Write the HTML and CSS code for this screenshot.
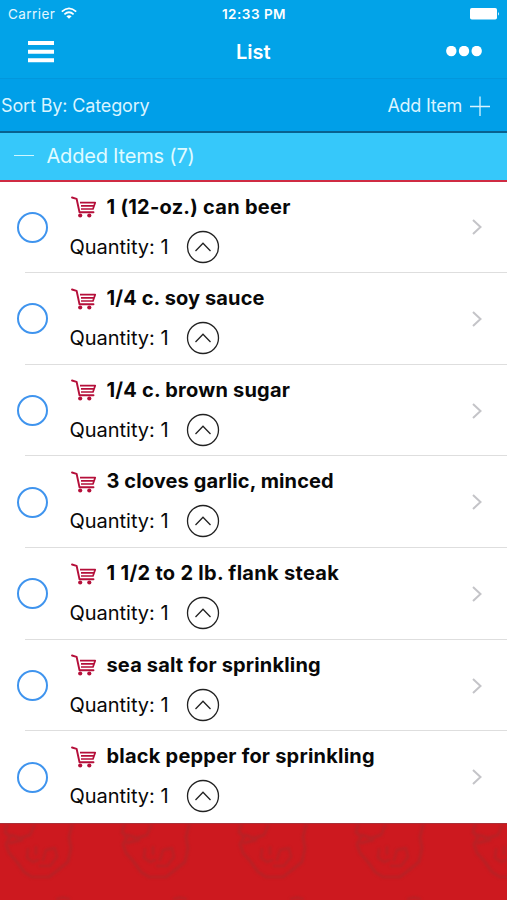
FILE: index.html
```
<!DOCTYPE html>
<html lang="en">
<head>
<meta charset="utf-8">
<title>List</title>
<link rel="stylesheet" href="styles.css">
</head>
<body>
<svg class="defs" aria-hidden="true">
  <symbol id="cart" viewBox="0 0 26 22">
    <path d="M1 1.5 5.6 2.8 8.5 16.2H22.5" fill="none" stroke="currentColor" stroke-width="1.9" stroke-linecap="round" stroke-linejoin="round"/>
    <path d="M9 6.6H24.2L22 13H10M10 9.8H22.5" fill="none" stroke="currentColor" stroke-width="1.7" stroke-linejoin="round"/>
    <circle cx="9.2" cy="19.5" r="2.1" fill="currentColor"/><circle cx="18.3" cy="19.5" r="2.1" fill="currentColor"/>
  </symbol>
  <symbol id="up" viewBox="0 0 34 34">
    <circle cx="17" cy="17" r="15.5" fill="none" stroke="currentColor" stroke-width="1.3"/>
    <path d="M9.5 21 17 13.3 24.5 21" fill="none" stroke="currentColor" stroke-width="1.3"/>
  </symbol>
  <symbol id="next" viewBox="0 0 12 18"><path d="M2 2 9.5 9 2 16" fill="none" stroke="currentColor" stroke-width="2"/></symbol>
  <symbol id="face" viewBox="0 0 117 77">
    <g fill="none" stroke="currentColor" stroke-linejoin="round" stroke-linecap="round">
      <path stroke-width="3.2" d="M7 1 5 8 10 13 6 20 9 29 17 38 24 48 32 53H49L58 46 68 38 71 24 69 13 72 1"/>
      <path stroke-width="3" d="M11 11 20 14 30 11 34 2M10 19 22 16"/>
      <path stroke-width="2.6" d="M28 25 27 34 33 38 38 36M36 23V30M43 36 46 26 55 24 57 33 50 42 40 42"/>
      <path stroke-width="2.4" d="M57 75 63 73.5 69 75"/>
    </g>
  </symbol>
</svg>
<header class="top">
  <div class="status">
    <div class="carrier"><span>Carrier</span>
      <svg width="16" height="13" viewBox="0 0 16 13"><g fill="none" stroke="#fff" stroke-width="1.7"><path d="M.8 4.6Q8-2 15.2 4.6M3.4 7.3Q8 3.2 12.6 7.3"/></g><path d="M5.4 9.2Q8 7.2 10.6 9.2L8 11.8Z" fill="#fff"/></svg>
    </div>
    <div class="time">12:33 PM</div>
    <svg class="battery" width="30" height="12" viewBox="0 0 30 12"><rect width="27" height="11.6" rx="1.8" fill="#fff"/><path d="M28 3.8Q29.8 5.8 28 7.8Z" fill="#fff"/></svg>
  </div>
  <nav class="nav">
    <svg width="26" height="22" viewBox="0 0 26 22"><path d="M0 2H26M0 10.7H26M0 19.2H26" stroke="#fff" stroke-width="4"/></svg>
    <h1>List</h1>
    <svg width="36" height="12" viewBox="0 0 36 12"><g fill="#fff"><circle cx="5.3" cy="5" r="5.2"/><circle cx="18" cy="5" r="5.2"/><circle cx="30.7" cy="5" r="5.2"/></g></svg>
  </nav>
</header>
<div class="sort">
  <span class="by">Sort By: Category</span>
  <span class="add">Add Item</span>
  <svg width="20" height="20" viewBox="0 0 20 20"><path d="M0 10.5H20M10 .5V20" stroke="#d9f4ff" stroke-width="1.3"/></svg>
</div>
<div class="section"><i></i><span>Added Items (7)</span></div>
<main class="list">
  <article class="row"><span class="check"></span><div class="info"><h2><svg class="cart"><use href="#cart"/></svg><span class="t1">1 (12-oz.) can beer</span></h2><p><span>Quantity: 1</span><svg class="up"><use href="#up"/></svg></p></div><svg class="next"><use href="#next"/></svg></article>
  <article class="row"><span class="check"></span><div class="info"><h2><svg class="cart"><use href="#cart"/></svg><span class="t2">1/4 c. soy sauce</span></h2><p><span>Quantity: 1</span><svg class="up"><use href="#up"/></svg></p></div><svg class="next"><use href="#next"/></svg></article>
  <article class="row"><span class="check"></span><div class="info"><h2><svg class="cart"><use href="#cart"/></svg><span class="t3">1/4 c. brown sugar</span></h2><p><span>Quantity: 1</span><svg class="up"><use href="#up"/></svg></p></div><svg class="next"><use href="#next"/></svg></article>
  <article class="row"><span class="check"></span><div class="info"><h2><svg class="cart"><use href="#cart"/></svg><span class="t4">3 cloves garlic, minced</span></h2><p><span>Quantity: 1</span><svg class="up"><use href="#up"/></svg></p></div><svg class="next"><use href="#next"/></svg></article>
  <article class="row"><span class="check"></span><div class="info"><h2><svg class="cart"><use href="#cart"/></svg><span class="t5">1 1/2 to 2 lb. flank steak</span></h2><p><span>Quantity: 1</span><svg class="up"><use href="#up"/></svg></p></div><svg class="next"><use href="#next"/></svg></article>
  <article class="row"><span class="check"></span><div class="info"><h2><svg class="cart"><use href="#cart"/></svg><span class="t6">sea salt for sprinkling</span></h2><p><span>Quantity: 1</span><svg class="up"><use href="#up"/></svg></p></div><svg class="next"><use href="#next"/></svg></article>
  <article class="row"><span class="check"></span><div class="info"><h2><svg class="cart"><use href="#cart"/></svg><span class="t7">black pepper for sprinkling</span></h2><p><span>Quantity: 1</span><svg class="up"><use href="#up"/></svg></p></div><svg class="next"><use href="#next"/></svg></article>
</main>
<footer class="pattern">
  <svg><use href="#face"/></svg><svg><use href="#face"/></svg><svg><use href="#face"/></svg><svg><use href="#face"/></svg><svg><use href="#face"/></svg>
</footer>
</body>
</html>
```
FILE: styles.css
```
* { box-sizing: border-box; }
body { margin: 0; height: 900px; overflow: hidden; display: flex; flex-direction: column; background: #fff; font-family: Inter, "Liberation Sans", sans-serif; color: #080808; }
svg { display: block; flex: none; }
.defs { display: none; }
h1, h2, p { margin: 0; font-size: inherit; font-weight: inherit; }
.top { height: 79px; background: #02a3e8; color: #fff; border-bottom: 1px solid #0297dd; }
.status { height: 27px; display: grid; grid-template-columns: 1fr auto 1fr; align-items: center; padding: 0 7px 0 8px; }
.carrier { display: flex; align-items: center; gap: 6px; font-size: 13.5px; letter-spacing: .45px; color: #e2f7ff; }
.time { font-size: 13.5px; font-weight: 600; letter-spacing: .5px; }
.battery { justify-self: end; }
.nav { height: 49px; display: grid; grid-template-columns: 1fr auto 1fr; align-items: center; padding: 0 25px 0 27.5px; }
.nav h1 { font-size: 20px; font-weight: 600; letter-spacing: 0; margin-left: -3px; }
.nav svg:last-child { justify-self: end; }
.sort { height: 54px; background: #009fe8; border-bottom: 2px solid #08618f; display: flex; align-items: center; padding: 1px 17px 0 1px; color: #d9f4ff; font-size: 18px; }
.by { flex: 1; letter-spacing: -.14px; }
.add { margin-right: 8px; letter-spacing: -.25px; }
.section { height: 48.5px; background: #36c8fa; border-bottom: 2px solid #cf2b43; display: flex; align-items: center; gap: 12.5px; padding: 0 14px; color: #e0fbff; font-size: 20px; letter-spacing: -.2px; }
.section i { width: 20px; height: 1px; margin-top: -2px; background: #cef6ff; }
.list { height: 641.5px; display: flex; flex-direction: column; }
.row { flex: 1; display: flex; align-items: center; padding: 0 24px 0 17px; background: linear-gradient(#dedede, #dedede) 25px 100% / 100% 1px no-repeat; }
.row:last-child { background: none; }
.check { width: 31px; height: 31px; flex: none; border: 2px solid #3f94ee; border-radius: 50%; }
.info { flex: 1; margin-left: 22px; align-self: stretch; }
.info h2 { display: flex; align-items: center; height: 50px; font-size: 20px; font-weight: 700; white-space: nowrap; }
.cart { width: 26px; height: 22px; color: #b50f3a; margin: 1px 10px 0 .5px; }
.t1 { letter-spacing: .26px; }
.t2 { letter-spacing: .13px; }
.t3 { letter-spacing: .22px; }
.t4 { letter-spacing: .11px; }
.t5 { letter-spacing: .3px; }
.t6 { letter-spacing: .17px; }
.t7 { letter-spacing: .22px; }
.info p { display: flex; align-items: center; height: 30px; font-size: 20px; }
.info p span { width: 116px; margin-left: -.5px; letter-spacing: -.02px; }
.up { width: 34px; height: 34px; margin-left: .5px; color: #222; }
.next { width: 12px; height: 18px; color: #c4c4c8; }
.pattern { flex: 1; background: #cd191f; border-top: 1px solid #aa3038; display: flex; color: #b92125; overflow: hidden; }
.pattern svg { width: 117px; height: 77px; filter: blur(.9px); }
```
